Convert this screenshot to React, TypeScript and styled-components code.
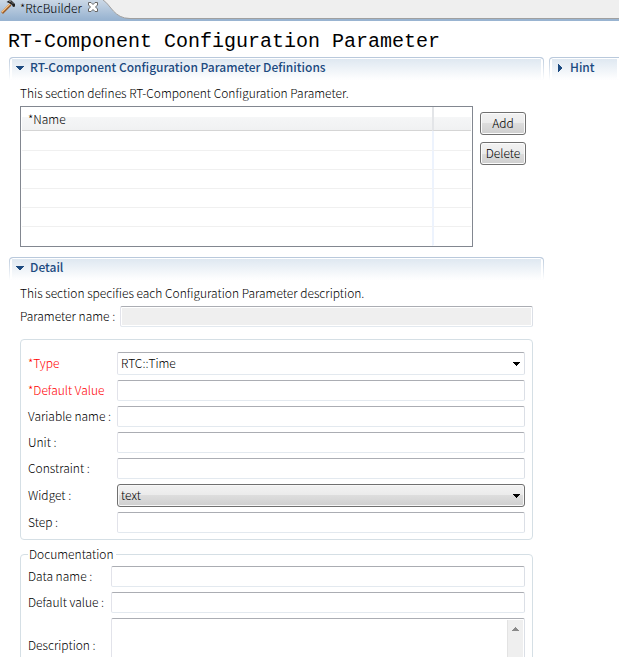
import React, { useId } from "react";
import styled, { createGlobalStyle, css } from "styled-components";

const GlobalStyle = createGlobalStyle`
  *, *::before, *::after { box-sizing: border-box; }
  body {
    margin: 0;
    background: #fff;
    color: #000;
    font: 300 12px/16px "Noto Sans CJK KR", "Noto Sans", sans-serif;
  }
  input, select, button, textarea { font: inherit; color: inherit; }
`;

const Page = styled.div`
  display: flex;
  flex-direction: column;
  height: 100vh;
  overflow: hidden;
`;

const TabBar = styled.header`
  flex: none;
  display: flex;
  height: 21px;
  background: linear-gradient(#efefef 18px, #a0a0a0 18px 19px, #99b4d1 19px);
`;

const Tab = styled.div`
  display: flex;
  align-items: flex-start;
  padding-left: 1px;
  background: linear-gradient(#cbd8e6, #99b4d1 19px);
`;

const TabName = styled.span`
  margin-left: 3px;
  line-height: 15px;
`;

const CloseButton = styled.button`
  display: flex;
  margin: 1px 0 0 5px;
  padding: 0;
  border: 0;
  background: none;
`;

const TabCurve = styled.svg`
  flex: none;
  display: block;
`;

const Title = styled.h1`
  flex: none;
  margin: 0;
  padding: 7px 0 0 8px;
  height: 36px;
  font: 400 20px/28px "Liberation Mono", monospace;
  white-space: nowrap;
`;

const Columns = styled.main`
  display: grid;
  grid-template-columns: minmax(0, 1fr) 70px;
  column-gap: 5px;
  padding-left: 9px;
`;

const SectionHead = styled.h2<{ $open?: boolean }>`
  display: flex;
  align-items: center;
  gap: 5px;
  height: 23px;
  margin: 0;
  padding: 0 0 3px 5px;
  border: 1px solid;
  border-color: #b9c9dc transparent transparent;
  border-radius: 4px ${(p) => (p.$open ? "4px" : "0")} 0 0;
  border-right-width: ${(p) => (p.$open ? "1px" : "0")};
  background:
    linear-gradient(#dfe8f1, #fff) 2px 1px / calc(100% - 4px) 100% no-repeat padding-box,
    linear-gradient(#fff, #fff) padding-box,
    linear-gradient(#b9c9dc, #fff) border-box;
  color: #1c4a80;
  font-size: 12px;
  font-weight: 500;
  line-height: 16px;
  white-space: nowrap;
`;

const Twistie = styled.svg`
  flex: none;
  width: 10px;
  height: 10px;
`;

const SectionBody = styled.div`
  padding: 5px 11px 0;
`;

const Intro = styled.p`
  margin: 0;
  line-height: 16px;
  white-space: nowrap;
`;

const TableArea = styled.div`
  display: flex;
  align-items: flex-start;
  gap: 7px;
  margin: 5px 7px 10px 0;
`;

const TableFrame = styled.div`
  flex: 1;
  padding: 0 1px;
  border: 1px solid #828790;
`;

const Table = styled.table`
  width: 100%;
  border-collapse: separate;
  border-spacing: 0;
  table-layout: fixed;
`;

const HeadCell = styled.th`
  height: 24px;
  padding: 0 6px;
  border-bottom: 1px solid #d5d5d5;
  background: linear-gradient(#fff 10px, #f5f6f7 10px, #f0f1f2);
  font-weight: inherit;
  line-height: 16px;
  text-align: left;
  & + & { width: 39px; border-left: 2px solid #e3e5e8; }
`;

const Cell = styled.td`
  height: 19px;
  padding: 0;
  border-bottom: 1px solid #f0f0f0;
  & + & { border-left: 2px solid #edf3fd; }
  tr:first-child > & { height: 20px; }
  tr:last-child > & { border-bottom-color: transparent; }
`;

const ButtonStack = styled.div`
  display: flex;
  flex-direction: column;
  gap: 7px;
  width: 46px;
  padding-top: 6px;
`;

const PushButton = styled.button`
  height: 23px;
  padding: 0 0 2px;
  border: 1px solid #707070;
  border-radius: 3px;
  background: linear-gradient(#f2f2f2, #ebebeb 50%, #dddddd 50%, #cfcfcf);
  box-shadow: inset 0 0 0 1px #fcfcfc;
  line-height: 16px;
`;

const fieldFrame = css`
  min-width: 0;
  width: 100%;
  margin: 0;
  border: 1px solid;
  border-color: #abadb3 #dbdfe6 #e3e9ef #e2e3ea;
  border-radius: 2px;
  outline: none;
  background: #fff;
`;

const TextInput = styled.input`
  ${fieldFrame}
  height: 21px;
  padding: 0 3px;
  &:disabled { background: #efefef; box-shadow: inset 0 0 0 1px #fff; }
`;

const ParamRow = styled.div`
  display: grid;
  grid-template-columns: 100px minmax(0, 1fr);
  align-items: center;
  margin-top: 5px;
`;

const Group = styled.fieldset`
  min-width: 0;
  margin: 12px 0 0;
  padding: 12px 7px 6px;
  border: 1px solid #d5dfe5;
  border-radius: 4px;
`;

const DocGroup = styled(Group)`
  margin-top: 6px;
  padding-top: 4px;
`;

const Legend = styled.legend`
  padding: 0 2px 0 1px;
  line-height: 16px;
`;

const Fields = styled.div<{ $label: number }>`
  display: grid;
  grid-template-columns: ${(p) => p.$label}px minmax(0, 1fr);
  align-items: center;
  row-gap: 5px;
`;

const Label = styled.label<{ $required?: boolean }>`
  padding-bottom: 2px;
  color: ${(p) => (p.$required ? "#f00" : "#000")};
  line-height: 16px;
  white-space: nowrap;
`;

const SelectBox = styled.div`
  position: relative;
  display: flex;
`;

const Select = styled.select<{ $raised?: boolean }>`
  ${fieldFrame}
  appearance: none;
  height: 23px;
  padding: 0 20px 2px 3px;
  ${(p) =>
    p.$raised &&
    css`
      border-color: #707070;
      border-radius: 3px;
      background: linear-gradient(#f2f2f2, #ebebeb 50%, #dddddd 50%, #cfcfcf);
      box-shadow: inset 0 0 0 1px #f8f8f8;
    `}
`;

const SelectArrow = styled.svg`
  position: absolute;
  right: 5px;
  top: 10px;
  pointer-events: none;
`;

const AreaFrame = styled.div`
  ${fieldFrame}
  display: flex;
  height: 56px;
  padding: 1px;
`;

const TextArea = styled.textarea`
  flex: 1;
  min-width: 0;
  padding: 2px;
  border: 0;
  outline: none;
  resize: none;
  background: none;
`;

const ScrollTrack = styled.div`
  display: flex;
  justify-content: center;
  width: 16px;
  padding-top: 7px;
  border-left: 1px solid #e3e3e3;
  background: #efefef;
`;

function SectionTitle({ open, children }: { open?: boolean; children: string }) {
  return (
    <SectionHead $open={open}>
      <Twistie viewBox="0 0 10 10" fill="#1c4a80" shapeRendering="crispEdges" aria-hidden="true">
        {open ? <path d="M1 4h8v1h-1v1h-1v1h-1v1h-2v-1h-1v-1h-1v-1h-1z" /> : <path d="M3 2h1v1h1v1h1v1h1v2h-1v1h-1v1h-1v1h-1z" />}
      </Twistie>
      {children}
    </SectionHead>
  );
}

function TextField({ label, required }: { label: string; required?: boolean }) {
  const id = useId();
  return (
    <>
      <Label htmlFor={id} $required={required}>{label}</Label>
      <TextInput id={id} type="text" />
    </>
  );
}

function SelectField({ label, value, required, raised }: { label: string; value: string; required?: boolean; raised?: boolean }) {
  const id = useId();
  return (
    <>
      <Label htmlFor={id} $required={required}>{label}</Label>
      <SelectBox>
        <Select id={id} defaultValue={value} $raised={raised}>
          <option>{value}</option>
        </Select>
        <SelectArrow width="7" height="4" shapeRendering="crispEdges" aria-hidden="true">
          <path d="M0 0h7v1h-1v1h-1v1h-1v1h-1v-1h-1v-1h-1v-1h-1z" />
        </SelectArrow>
      </SelectBox>
    </>
  );
}

export default function App() {
  return (
    <Page>
      <GlobalStyle />
      <TabBar>
        <Tab>
          <svg width="16" height="15" viewBox="0 0 16 15" aria-hidden="true">
            <path d="M1 13 9.500 4.500" stroke="#9a5a25" strokeWidth="2.6" />
            <path d="M.7 12.200 9 4" stroke="#f5c48a" strokeWidth="1.2" />
            <path d="M5.500 2 8 .5h2.500l3.500 3.500v2.500l-2 .5-1-2-3-2z" fill="#222" />
            <path d="M8 1.500h2l2.500 2.500" stroke="#777" fill="none" />
          </svg>
          <TabName>*RtcBuilder</TabName>
          <CloseButton aria-label="Close">
            <svg width="12" height="12" viewBox="0 0 12 12" aria-hidden="true">
              <path
                d="M1.500 1.500h2.500l2 2 2-2h2.500v2.500l-2 2 2 2v2.500H8l-2-2-2 2H1.500V8l2-2-2-2z"
                fill="#fff"
                stroke="#666"
              />
            </svg>
          </CloseButton>
        </Tab>
        <TabCurve width="34" height="21" viewBox="0 0 34 21" aria-hidden="true">
          <defs>
            <linearGradient id="tabFill" x1="0" y1="0" x2="0" y2="19" gradientUnits="userSpaceOnUse">
              <stop offset="0" stopColor="#cbd8e6" />
              <stop offset="1" stopColor="#99b4d1" />
            </linearGradient>
          </defs>
          <path d="M0 0H4C12 5 15 18.500 31 18.500H34V21H0z" fill="url(#tabFill)" />
          <path d="M4 0C12 5 15 18.500 31 18.500H34" fill="none" stroke="#a0a0a0" />
        </TabCurve>
      </TabBar>

      <Title>RT-Component Configuration Parameter</Title>

      <Columns>
        <div>
          <section>
            <SectionTitle open>RT-Component Configuration Parameter Definitions</SectionTitle>
            <SectionBody>
              <Intro>This section defines RT-Component Configuration Parameter.</Intro>
              <TableArea>
                <TableFrame>
                  <Table>
                    <thead>
                      <tr>
                        <HeadCell scope="col">*Name</HeadCell>
                        <HeadCell />
                      </tr>
                    </thead>
                    <tbody>
                      {Array.from({ length: 6 }, (_, i) => (
                        <tr key={i}>
                          <Cell />
                          <Cell />
                        </tr>
                      ))}
                    </tbody>
                  </Table>
                </TableFrame>
                <ButtonStack>
                  <PushButton type="button">Add</PushButton>
                  <PushButton type="button">Delete</PushButton>
                </ButtonStack>
              </TableArea>
            </SectionBody>
          </section>

          <section>
            <SectionTitle open>Detail</SectionTitle>
            <SectionBody>
              <Intro>This section specifies each Configuration Parameter description.</Intro>
              <ParamRow>
                <Label htmlFor="param-name">Parameter name :</Label>
                <TextInput id="param-name" type="text" disabled />
              </ParamRow>

              <Group>
                <Fields $label={89}>
                  <SelectField label="*Type" value="RTC::Time" required />
                  <TextField label="*Default Value" required />
                  <TextField label="Variable name :" />
                  <TextField label="Unit :" />
                  <TextField label="Constraint :" />
                  <SelectField label="Widget :" value="text" raised />
                  <TextField label="Step :" />
                </Fields>
              </Group>

              <DocGroup>
                <Legend>Documentation</Legend>
                <Fields $label={83}>
                  <TextField label="Data name :" />
                  <TextField label="Default value :" />
                  <Label htmlFor="description">Description :</Label>
                  <AreaFrame>
                    <TextArea id="description" />
                    <ScrollTrack>
                      <svg width="7" height="4" shapeRendering="crispEdges" aria-hidden="true">
                        <path d="M3 0h1v1h1v1h1v1h1v1h-7v-1h1v-1h1v-1h1z" fill="#8a8a8a" />
                      </svg>
                    </ScrollTrack>
                  </AreaFrame>
                </Fields>
              </DocGroup>
            </SectionBody>
          </section>
        </div>

        <aside>
          <SectionTitle>Hint</SectionTitle>
        </aside>
      </Columns>
    </Page>
  );
}
